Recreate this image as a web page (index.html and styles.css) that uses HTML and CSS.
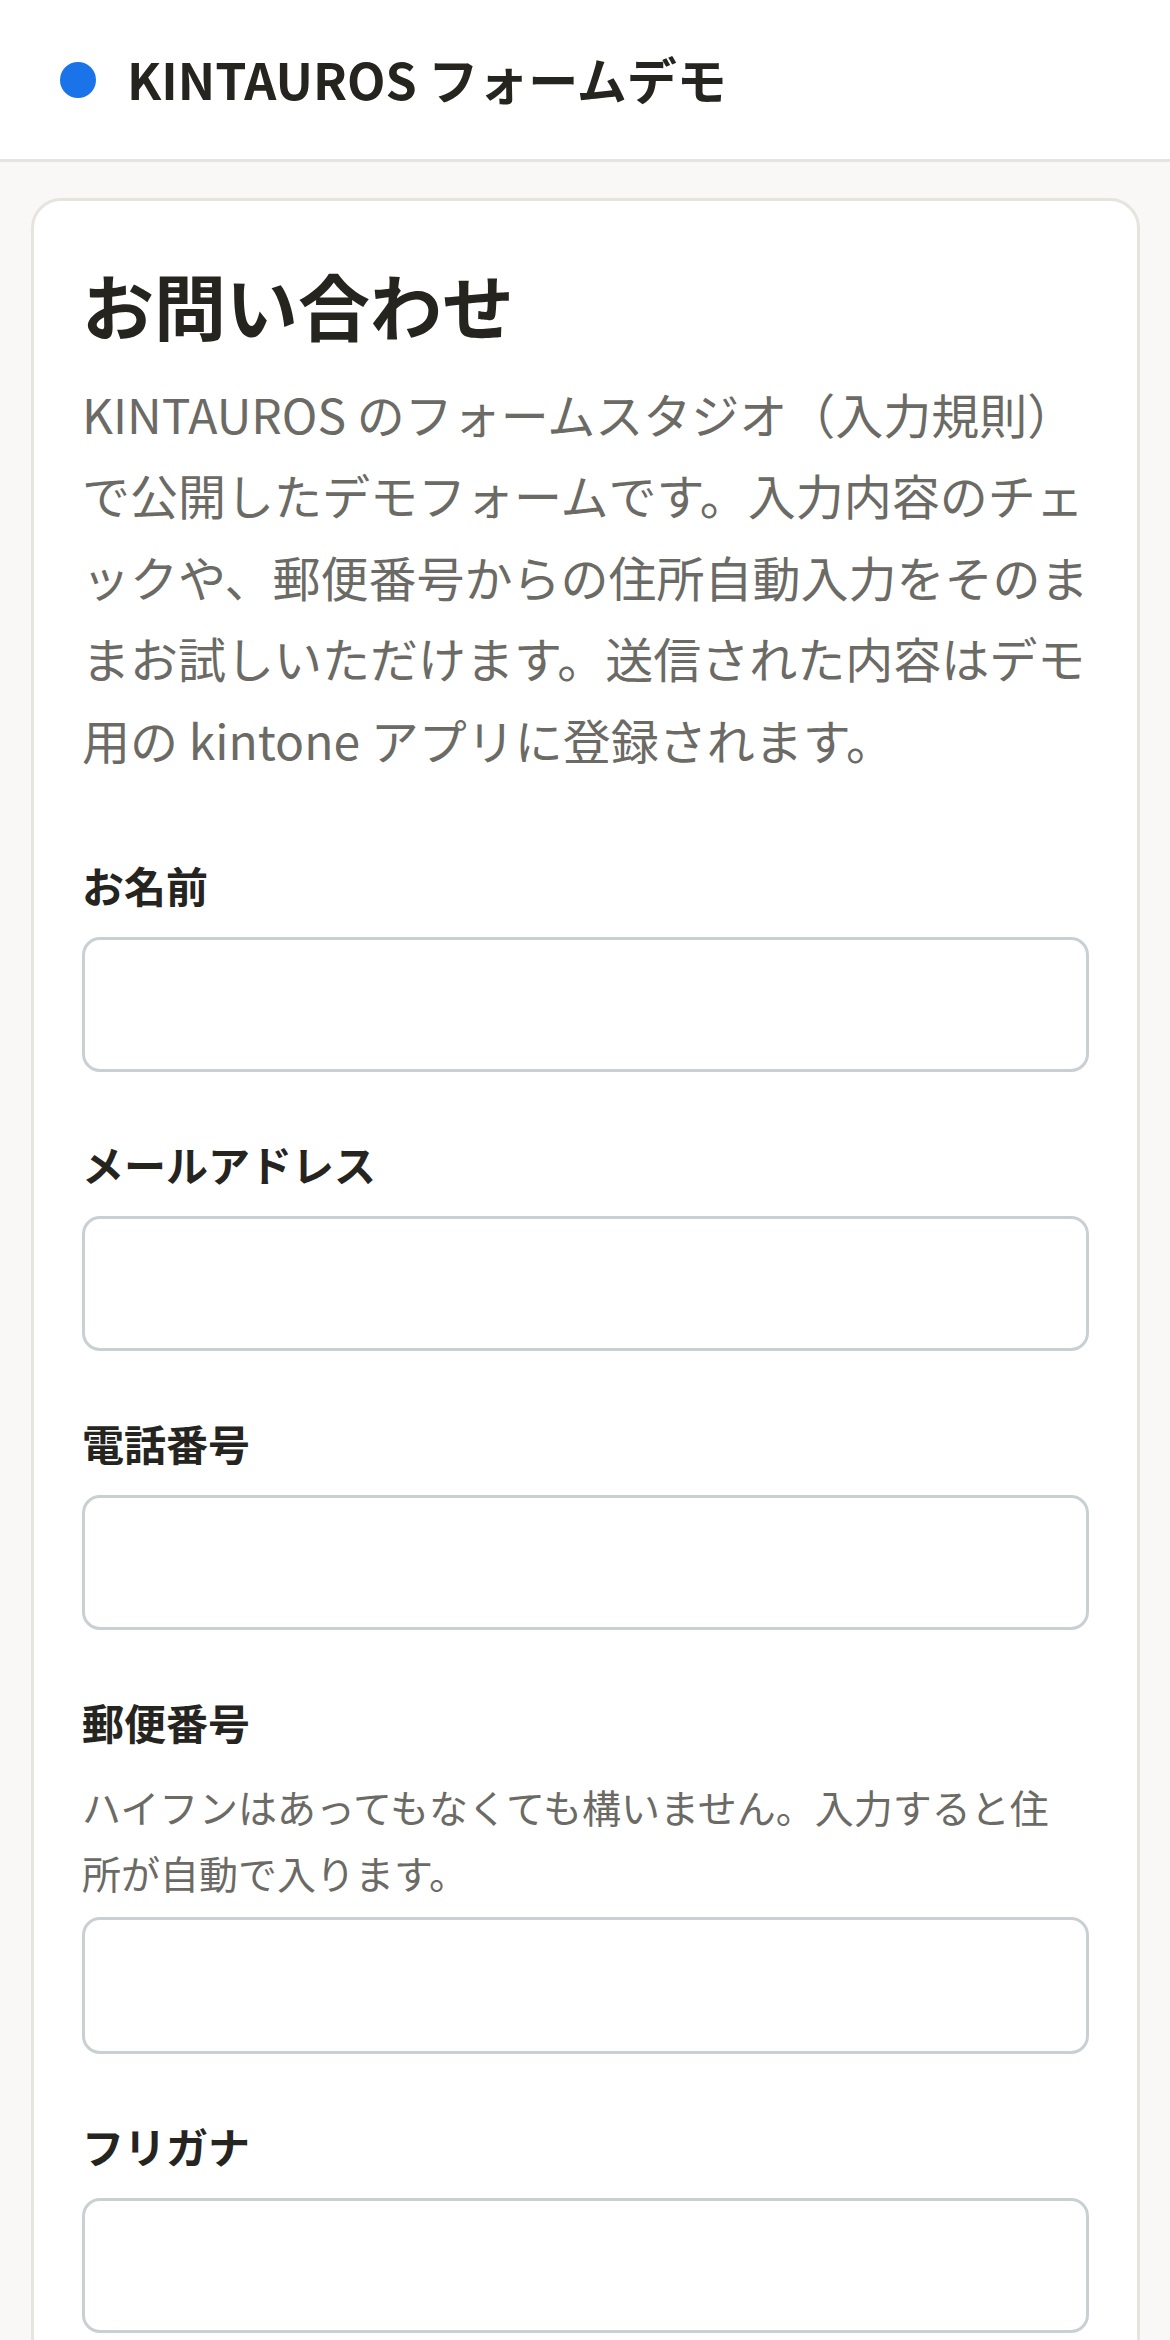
FILE: index.html
```html
<!DOCTYPE html>
<html lang="ja">
<head>
<meta charset="utf-8">
<title>KINTAUROS フォームデモ</title>
<link rel="stylesheet" href="styles.css">
</head>
<body>
<header class="topbar">
  <span class="brand-dot"></span>
  <span class="brand-name">KINTAUROS フォームデモ</span>
</header>
<main class="page">
  <section class="card">
    <h1 class="card-title">お問い合わせ</h1>
    <p class="lead">
      <span class="line">KINTAUROS のフォームスタジオ（入力規則）</span>
      <span class="line">で公開したデモフォームです。入力内容のチェ</span>
      <span class="line">ックや、郵便番号からの住所自動入力をそのま</span>
      <span class="line">まお試しいただけます。送信された内容はデモ</span>
      <span class="line">用の kintone アプリに登録されます。</span>
    </p>
    <form class="form">
      <div class="field">
        <label class="field-label" for="f-name">お名前</label>
        <input class="field-input" id="f-name" type="text">
      </div>
      <div class="field">
        <label class="field-label" for="f-mail">メールアドレス</label>
        <input class="field-input" id="f-mail" type="email">
      </div>
      <div class="field">
        <label class="field-label" for="f-tel">電話番号</label>
        <input class="field-input" id="f-tel" type="tel">
      </div>
      <div class="field">
        <label class="field-label" for="f-zip">郵便番号</label>
        <p class="field-help">
          <span class="line">ハイフンはあってもなくても構いません。入力すると住</span>
          <span class="line">所が自動で入ります。</span>
        </p>
        <input class="field-input field-input-tall" id="f-zip" type="text">
      </div>
      <div class="field">
        <label class="field-label" for="f-kana">フリガナ</label>
        <input class="field-input" id="f-kana" type="text">
      </div>
    </form>
  </section>
</main>
</body>
</html>
```

FILE: styles.css
```css
* {
  box-sizing: border-box;
}

html, body {
  margin: 0;
  padding: 0;
}

body {
  background: #f9f8f6;
  font-family: "Noto Sans CJK JP", "Noto Sans", sans-serif;
  color: #25241f;
}

.topbar {
  height: 162px;
  background: #ffffff;
  border-bottom: 3px solid #e6e4de;
  display: flex;
  align-items: center;
  gap: 31px;
  padding-left: 60px;
}

.brand-dot {
  width: 36px;
  height: 36px;
  border-radius: 50%;
  background: #1a73e8;
  flex: none;
}

.brand-name {
  font-size: 50px;
  font-weight: 700;
  line-height: 1;
  color: #25241f;
  margin-top: -4px;
}

.page {
  padding: 36px 30px 40px 31px;
}

.card {
  background: #ffffff;
  border: 3px solid #e6e4de;
  border-radius: 30px;
  padding: 56px 48px 60px 48px;
}

.card-title {
  margin: 0;
  font-size: 72px;
  font-weight: 700;
  line-height: 1.3;
  color: #25241f;
}

.lead {
  margin: 22px -8px 72px 0;
  font-size: 48px;
  line-height: 1.7;
  color: #6b6a65;
}

.line {
  display: block;
  white-space: nowrap;
}

.form {
  display: flex;
  flex-direction: column;
  gap: 60px;
}

.field {
  display: flex;
  flex-direction: column;
}

.field-label {
  font-size: 42px;
  font-weight: 700;
  line-height: 1.5;
  color: #25241f;
  margin-bottom: 21px;
}

.field-help {
  margin: -1px 0 12px 0;
  font-size: 39px;
  line-height: 1.7;
  color: #6b6a65;
}

.field-input {
  display: block;
  width: 100%;
  height: 135px;
  border: 3px solid #c9d0d4;
  border-radius: 18px;
  background: #ffffff;
  font-family: inherit;
  font-size: 48px;
  padding: 0 30px;
  outline: none;
}

.field-input-tall {
  height: 137px;
}
```
